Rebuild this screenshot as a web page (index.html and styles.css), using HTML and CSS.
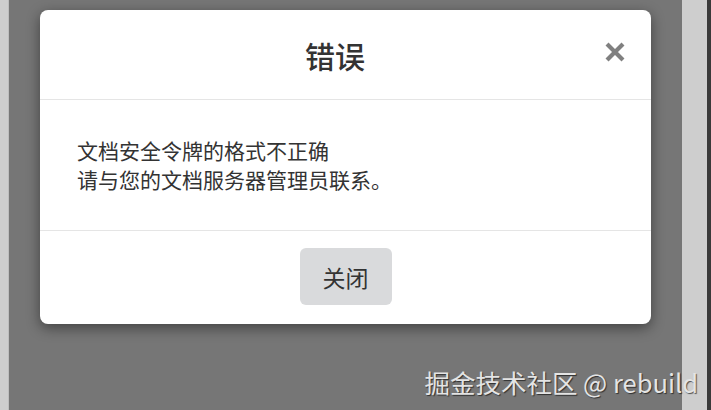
FILE: index.html
```html
<!DOCTYPE html>
<html lang="zh-CN">
<head>
<meta charset="utf-8">
<link rel="stylesheet" href="styles.css">
</head>
<body>
<div class="page">
  <div class="strip-left"></div>
  <div class="backdrop">
    <div class="modal">
      <div class="modal-header">
        <h4 class="modal-title">错误</h4>
        <button class="close" aria-label="关闭">
          <svg width="20" height="20" viewBox="0 0 20 20"><path d="M3.5 3.5 L16.5 16.5 M16.5 3.5 L3.5 16.5" stroke="#808080" stroke-width="4.2" stroke-linecap="square"/></svg>
        </button>
      </div>
      <div class="modal-body">
        <p>文档安全令牌的格式不正确<br>请与您的文档服务器管理员联系。</p>
      </div>
      <div class="modal-footer">
        <button class="btn">关闭</button>
      </div>
    </div>
  </div>
  <div class="strip-right"></div>
  <div class="edge"></div>
  <div class="watermark">掘金技术社区 @ rebuild</div>
</div>
</body>
</html>
```
FILE: styles.css
```css
html, body {
  margin: 0;
  padding: 0;
  width: 711px;
  height: 410px;
  overflow: hidden;
  font-family: "Noto Sans CJK SC", "Noto Sans", sans-serif;
}
.page {
  position: relative;
  display: flex;
  width: 711px;
  height: 410px;
}
.strip-left {
  width: 8px;
  background: #cdcdcd;
  border-right: 1px solid #bdbdbd;
}
.backdrop {
  width: 673px;
  background: #767676;
  padding: 10px 31px 0 31px;
  box-sizing: border-box;
}
.strip-right {
  width: 25px;
  background: #cecece;
}
.edge {
  width: 4px;
  background: #3a3a3a;
}
.modal {
  width: 611px;
  background: #fff;
  border-radius: 8px;
  box-shadow: 0 4px 14px rgba(0, 0, 0, 0.45);
}
.modal-header {
  display: flex;
  align-items: center;
  padding: 27px 26px 26px 26px;
  border-bottom: 1px solid #e5e5e5;
}
.modal-title {
  flex: 1;
  margin: 0;
  text-align: center;
  font-size: 30px;
  line-height: 36px;
  font-weight: 500;
  color: #333;
}
.close {
  width: 21px;
  height: 21px;
  padding: 0;
  border: 0;
  background: none;
  display: flex;
  align-items: center;
  justify-content: center;
  margin-top: -7px;
}
.modal-body {
  padding: 36px 37px;
}
.modal-body p {
  margin: 0;
  font-size: 21px;
  line-height: 29px;
  color: #333;
}
.modal-footer {
  border-top: 1px solid #e5e5e5;
  padding: 17px 0 19px;
  display: flex;
  justify-content: center;
}
.btn {
  width: 92px;
  height: 57px;
  border: 0;
  border-radius: 6px;
  background: #d9dadc;
  color: #333;
  font-family: "Noto Sans CJK SC", "Noto Sans", sans-serif;
  font-size: 23px;
  padding: 0;
}
.watermark {
  position: absolute;
  right: 13px;
  bottom: 13px;
  font-size: 25.5px;
  line-height: 30px;
  color: #e4e4e4;
  text-shadow: 1px 1px 1px rgba(0, 0, 0, 0.6);
  white-space: nowrap;
}
```
